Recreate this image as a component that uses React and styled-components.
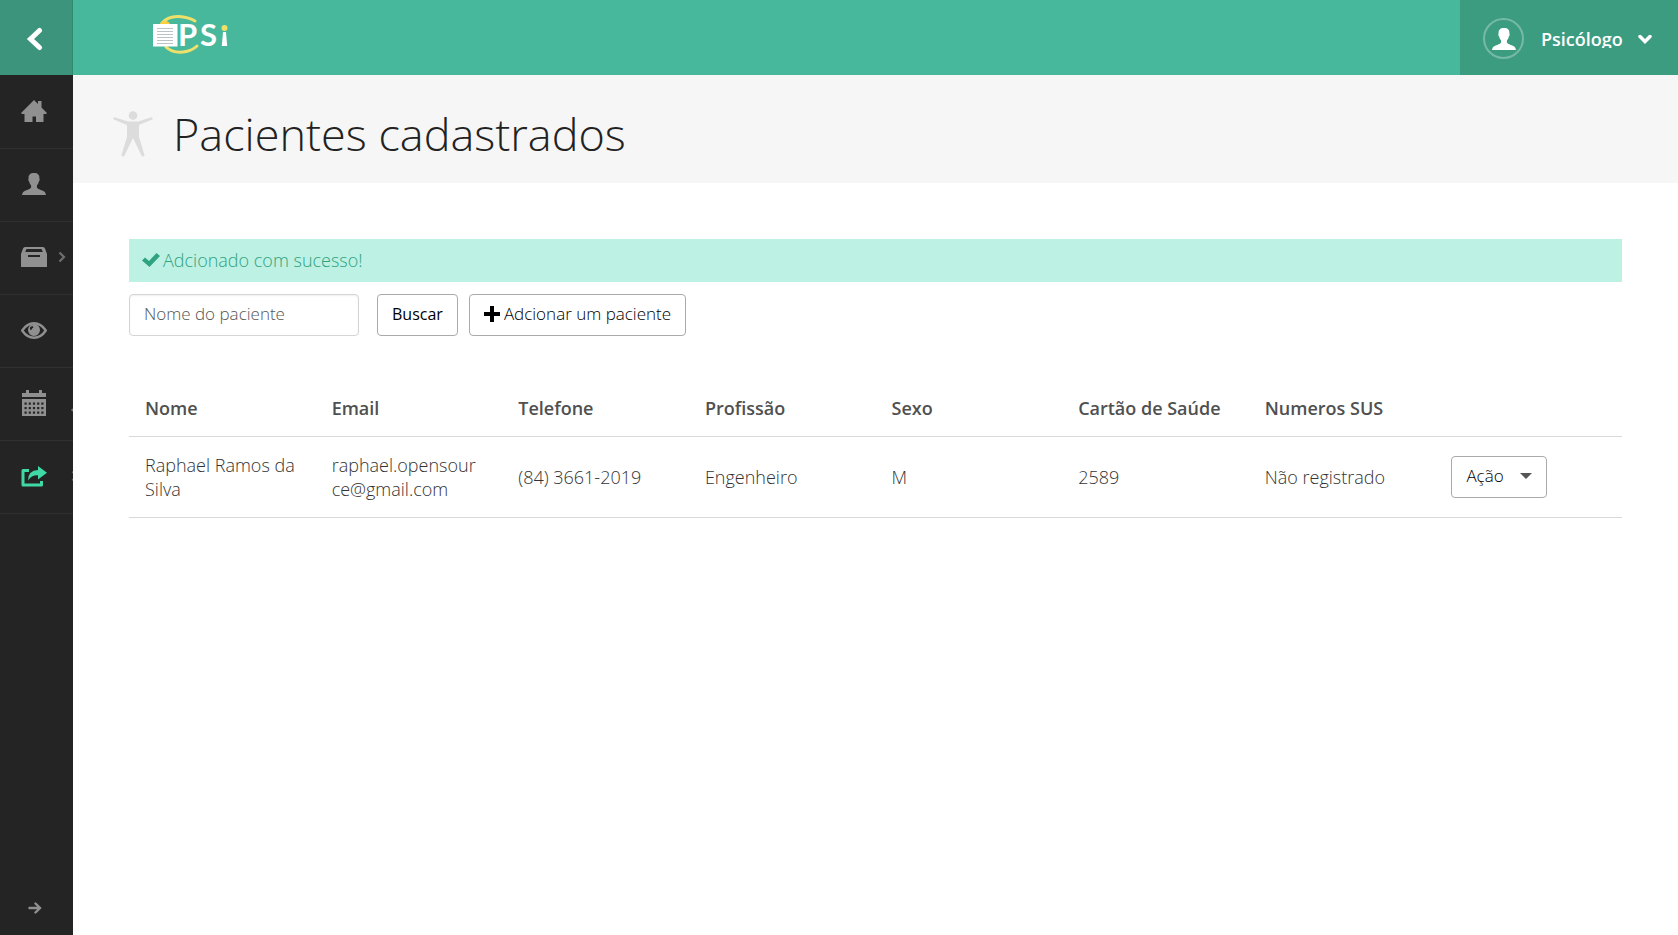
import React from 'react';
import styled, { createGlobalStyle } from 'styled-components';

const GlobalStyle = createGlobalStyle`
  *, *::before, *::after { box-sizing: border-box; }
  body {
    margin: 0;
    background: #fff;
    color: #333;
    font-family: 'Open Sans', 'Liberation Sans', sans-serif;
    font-size: 18px;
    font-weight: 300;
    line-height: 24px;
  }
  button, input { font: inherit; }
  svg { display: block; }
`;

const Page = styled.div`
  display: flex;
  min-height: 100vh;
`;

const Sidebar = styled.nav`
  flex: 0 0 73px;
  display: flex;
  flex-direction: column;
  background: #242424;
`;

const Collapse = styled.button`
  height: 75px;
  padding: 2px 0 0 26px;
  border: 0;
  border-right: 1px solid #2f8a6e;
  background: #3b947b;
  color: #fff;
  cursor: pointer;
`;

const Menu = styled.ul`
  flex: 1;
  margin: 0;
  padding: 1px 0 0;
  list-style: none;
`;

const MenuItem = styled.li`
  position: relative;
  overflow: hidden;
  border-bottom: 1px solid #303030;
`;

const MenuLink = styled.a`
  display: flex;
  align-items: center;
  justify-content: center;
  height: 72px;
  padding: 0 6px 2px 0;
  color: ${(p) => (p.$active ? '#40d9a5' : '#909090')};
`;

const SubArrow = styled.span`
  position: absolute;
  top: ${(p) => (p.$low ? '36px' : '29px')};
  left: ${(p) => (p.$edge ? '71px' : '58px')};
  color: #6f6f6f;
`;

const Expand = styled.button`
  height: 54px;
  padding: 0 0 0 28px;
  border: 0;
  background: none;
  color: #909090;
  cursor: pointer;
`;

const Main = styled.div`
  flex: 1;
  min-width: 0;
`;

const Header = styled.header`
  display: flex;
  justify-content: space-between;
  height: 75px;
  background: #47b89b;
`;

const Brand = styled.a`
  padding: 10px 0 0 76px;
`;

const UserMenu = styled.button`
  display: flex;
  align-items: center;
  width: 218px;
  padding: 2px 26px 0 23px;
  border: 0;
  background: #3c9c80;
  color: #fff;
  cursor: pointer;
`;

const Avatar = styled.span`
  display: flex;
  justify-content: center;
  align-items: center;
  width: 41px;
  height: 41px;
  border: 2px solid #76baa6;
  border-radius: 50%;
`;

const UserName = styled.span`
  flex: 1;
  height: 18px;
  margin-left: 17px;
  overflow: hidden;
  font-weight: 600;
  line-height: 18px;
  text-align: left;
`;

const TitleBar = styled.div`
  display: flex;
  align-items: center;
  gap: 20px;
  height: 108px;
  padding: 10px 40px 0;
  background: #f6f6f6;
  color: #dcdcdc;
`;

const Title = styled.h1`
  margin: 0;
  color: #222;
  font-size: 45px;
  font-weight: 300;
  line-height: 60px;
`;

const Content = styled.main`
  padding: 56px;
`;

const Alert = styled.div`
  display: flex;
  align-items: center;
  gap: 3px;
  height: 43px;
  margin-bottom: 12px;
  padding: 0 13px 2px;
  background: #bdf1e4;
  color: #2fa280;
`;

const SearchForm = styled.form`
  display: flex;
  margin-bottom: 44px;
`;

const SearchInput = styled.input`
  width: 230px;
  height: 42px;
  margin-right: 18px;
  padding: 0 14px 4px;
  border: 1px solid #d5d5d5;
  border-radius: 4px;
  box-shadow: inset 0 1px 2px #eee;
  font-size: 17px;
  &::placeholder { color: #555; opacity: 1; }
`;

const Button = styled.button`
  display: flex;
  align-items: center;
  gap: ${(p) => p.$gap || 4}px;
  height: 42px;
  margin-right: 11px;
  padding: 0 14px 2px;
  border: 1px solid #aaa;
  border-radius: 4px;
  background: #fff;
  color: #000;
  font-size: ${(p) => (p.$strong ? '16px' : '17px')};
  font-weight: ${(p) => (p.$strong ? 400 : 300)};
  cursor: pointer;
`;

const Table = styled.table`
  width: 100%;
  table-layout: fixed;
  border-collapse: collapse;
`;

const HeadCell = styled.th`
  height: 56px;
  padding: 0 16px;
  border-bottom: 1px solid #d9d9d9;
  color: #505050;
  font-weight: 600;
  text-align: left;
  white-space: nowrap;
`;

const Cell = styled.td`
  height: 81px;
  padding: 0 19px 0 16px;
  border-bottom: 1px solid #d9d9d9;
  word-break: break-word;
`;

const icons = {
  home: (
    <svg width="26" height="22" viewBox="0 0 26 22" fill="currentColor" aria-hidden="true">
      <path d="M13 0 17 4V1h3.500v6.500L26 13l-1 1h-2.500v8H15v-5.500h-3.500V22h-8v-8H1l-1-1z" />
    </svg>
  ),
  archive: (
    <svg width="26" height="20" viewBox="0 0 26 20" fill="currentColor" aria-hidden="true">
      <path fillRule="evenodd" d="M4 0h18q1.500 0 2 1.500L26 7v13H0V7l2-5.500Q2.500 0 4 0zM5.500 2 4.200 5h17.600l-1.300-3zM7 8v2h12V8z" />
    </svg>
  ),
  eye: (
    <svg width="26" height="17" viewBox="0 0 26 17" aria-hidden="true">
      <path d="M1.200 8.500Q6 1.300 13 1.300T24.800 8.500Q20 15.700 13 15.700T1.200 8.500z" fill="none" stroke="currentColor" strokeWidth="2.400" />
      <path fillRule="evenodd" d="M13 2a6 6 0 1 1 0 12a6 6 0 0 1 0-12zM11.500 4a3 3 0 0 0-2.500 3.500l1.500.5q0-2 2-2.500z" fill="currentColor" />
    </svg>
  ),
  calendar: (
    <svg width="24" height="26" viewBox="0 0 24 26" aria-hidden="true">
      <path d="M0 3h4V0h3v3h10V0h3v3h4v4H0zM0 9h24v17H0z" fill="currentColor" />
      {[12.5, 17, 21.500].map((y) =>
        [2.500, 6.700, 10.900, 15.100, 19.300].map((x) => (
          <rect key={`${x}-${y}`} x={x} y={y} width="2.200" height="2.200" fill="#242424" />
        ))
      )}
    </svg>
  ),
  share: (
    <svg width="26" height="21" viewBox="0 0 26 21" aria-hidden="true">
      <path d="M8 4.500H2V19h18.500v-4" fill="none" stroke="currentColor" strokeWidth="3" strokeLinejoin="round" />
      <path d="M17 0 26 6.800 17 13.500V9.300Q10.500 9 7 14.500 7 4.500 17 4z" fill="currentColor" />
    </svg>
  ),
};

const Person = () => (
  <svg width="24" height="22" viewBox="0 0 24 22" fill="currentColor" aria-hidden="true">
    <path d="M12 0c3.900 0 5.700 2 5.400 5.400.5.800.2 2.600-.6 3.200-.3 1.800-.9 2.900-1.900 3.900v1.900c.8 1.700 3.200 2.100 6 3.400 2 .9 2.600 2 3.100 4.200H0c.5-2.200 1.100-3.300 3.100-4.200 2.800-1.300 5.200-1.700 6-3.400v-1.900c-1-1-1.600-2.100-1.900-3.900-.8-.6-1.100-2.400-.6-3.200C6.300 2 8.100 0 12 0z" />
  </svg>
);

const Chevron = ({ left }) => (
  <svg width="8" height="12" viewBox="0 0 8 12" fill="none" stroke="currentColor" strokeWidth="2.200" aria-hidden="true">
    <path d={left ? 'M6.500 2 1.500 6l5 4' : 'M1.500 1.500 6 6l-4.500 4.500'} />
  </svg>
);

const Logo = () => (
  <svg width="80" height="46" viewBox="0 0 80 46" role="img" aria-label="PSi">
    <path d="M13 13Q19 6 30 6.500 39 7 46 11M17 37Q23 43 34 42 43 41 48 36" fill="none" stroke="#eee06a" strokeWidth="3" strokeLinecap="round" />
    <path d="M11 14q1-3 5-3t5 3z" fill="#ffcf3f" />
    <path d="M4 14h24.500v22.500H4z" fill="#fff" />
    <path d="M8 18.500h16M8 21.500h16M8 24.500h16M8 27.500h16M8 30.500h16M8 33.500h16" stroke="#b9c4c6" />
    <g fill="#fff" fontFamily="Lato, sans-serif" fontSize="31" fontWeight="700">
      <text x="29" y="36">P</text>
      <text x="51" y="36">S</text>
    </g>
    <circle cx="75.500" cy="18" r="3" fill="#eee06a" />
    <path d="M74 22h3l1.200 14h-5.400z" fill="#fff" />
  </svg>
);

const menu = [
  { key: 'home', label: 'Início', icon: icons.home },
  { key: 'profile', label: 'Perfil', icon: <Person /> },
  { key: 'archive', label: 'Arquivo', icon: icons.archive, arrow: <SubArrow><Chevron /></SubArrow> },
  { key: 'view', label: 'Visualizar', icon: icons.eye },
  { key: 'calendar', label: 'Agenda', icon: icons.calendar, arrow: <SubArrow $edge $low><Chevron left /></SubArrow> },
  { key: 'share', label: 'Encaminhar', icon: icons.share, active: true, arrow: <SubArrow $edge><Chevron /></SubArrow> },
];

const columns = ['Nome', 'Email', 'Telefone', 'Profissão', 'Sexo', 'Cartão de Saúde', 'Numeros SUS', ''];
const patients = [
  ['Raphael Ramos da Silva', 'raphael.opensource@gmail.com', '(84) 3661-2019', 'Engenheiro', 'M', '2589', 'Não registrado'],
];

export default function App() {
  return (
    <Page>
      <GlobalStyle />
      <Sidebar>
        <Collapse type="button" aria-label="Recolher menu">
          <svg width="17" height="24" viewBox="0 0 17 24" fill="none" stroke="currentColor" strokeWidth="5" aria-hidden="true">
            <path d="M13.500 3.500 4.500 12l9 8.500" strokeLinecap="round" />
          </svg>
        </Collapse>
        <Menu>
          {menu.map((item) => (
            <MenuItem key={item.key}>
              <MenuLink href="#" aria-label={item.label} $active={item.active}>{item.icon}</MenuLink>
              {item.arrow}
            </MenuItem>
          ))}
        </Menu>
        <Expand type="button" aria-label="Expandir menu">
          <svg width="14" height="12" viewBox="0 0 14 12" fill="none" stroke="currentColor" strokeWidth="2.400" strokeLinecap="round" aria-hidden="true">
            <path d="M1.500 6H12M7.500 1.500 12 6l-4.500 4.500" />
          </svg>
        </Expand>
      </Sidebar>
      <Main>
        <Header>
          <Brand href="#"><Logo /></Brand>
          <UserMenu type="button">
            <Avatar><Person /></Avatar>
            <UserName>Psicólogo</UserName>
            <svg width="14" height="10" viewBox="0 0 14 10" fill="none" stroke="currentColor" strokeWidth="3.500" strokeLinecap="round" aria-hidden="true">
              <path d="M2 2.500 7 7.500l5-5" />
            </svg>
          </UserMenu>
        </Header>
        <TitleBar>
          <svg width="40" height="46" viewBox="0 0 40 46" fill="currentColor" aria-hidden="true">
            <circle cx="20" cy="4.500" r="4.300" />
            <path d="M1.500 6.200 15 10.500h10l13.500-4.300q2 .8.700 2.300L26 14v12l5.500 18q-.8 2.500-2.800 1L20 27l-8.700 18q-2 1.500-2.800-1L14 26V14L.8 8.500q-1.300-1.500.7-2.300z" />
          </svg>
          <Title>Pacientes cadastrados</Title>
        </TitleBar>
        <Content>
          <Alert role="status">
            <svg width="18" height="14" viewBox="0 0 18 14" fill="currentColor" aria-hidden="true">
              <path d="M0 7.500 3 4.500l4 3.500L14.500 0 18 3 7.500 14z" />
            </svg>
            Adcionado com sucesso!
          </Alert>
          <SearchForm onSubmit={(e) => e.preventDefault()}>
            <SearchInput type="text" aria-label="Nome do paciente" placeholder="Nome do paciente" />
            <Button type="submit" $strong>Buscar</Button>
            <Button type="button">
              <svg width="16" height="16" viewBox="0 0 16 16" aria-hidden="true">
                <path d="M6 0h4v6h6v4h-6v6H6v-6H0V6h6z" />
              </svg>
              Adcionar um paciente
            </Button>
          </SearchForm>
          <Table>
            <thead>
              <tr>{columns.map((c) => <HeadCell key={c} scope="col">{c}</HeadCell>)}</tr>
            </thead>
            <tbody>
              {patients.map((row) => (
                <tr key={row[1]}>
                  {row.map((v) => <Cell key={v}>{v}</Cell>)}
                  <Cell>
                    <Button type="button" aria-haspopup="menu" $gap={16}>
                      Ação
                      <svg width="12" height="6" viewBox="0 0 12 6" aria-hidden="true"><path d="M0 0h12L6 6z" fill="#555" /></svg>
                    </Button>
                  </Cell>
                </tr>
              ))}
            </tbody>
          </Table>
        </Content>
      </Main>
    </Page>
  );
}
